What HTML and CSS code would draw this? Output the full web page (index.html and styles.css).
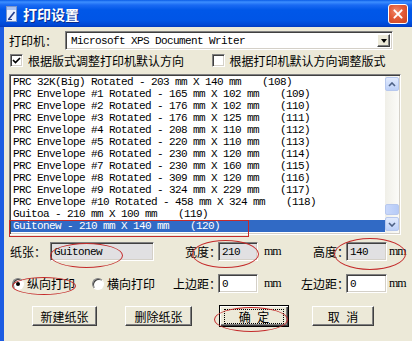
FILE: index.html
```html
<!DOCTYPE html>
<html lang="zh-CN">
<head>
    <meta charset="UTF-8">
    <meta name="viewport" content="width=device-width, initial-scale=1.0">
    <title>打印设置</title>
    <link rel="stylesheet" href="styles.css">
</head>
<body>
    <div class="window">
        <div class="titlebar">
            <svg class="app-icon" viewBox="0 0 13 16" width="13" height="16">
                <rect x="1.5" y="0.5" width="10" height="15" fill="#EAF1FF" stroke="#7B95C9"/>
                <rect x="2" y="1" width="9" height="3" fill="#A9C2F2"/>
                <path d="M3.5 13.5 L9.5 6" stroke="#233F8E" stroke-width="1.6" fill="none"/>
                <path d="M3 13.5 H7" stroke="#233F8E" fill="none"/>
            </svg>
            <span class="title">打印设置</span>
            <div class="close-btn">
                <svg viewBox="0 0 20 20" width="20" height="20">
                    <path d="M6 6 L14 14 M14 6 L6 14" stroke="#fff" stroke-width="2.2" stroke-linecap="round"/>
                </svg>
            </div>
        </div>

        <div class="client">
            <div class="row printer-row">
                <span class="printer-label">打印机：</span>
                <div class="combo sunken">
                    <span class="mono combo-text">Microsoft XPS Document Writer</span>
                    <span class="combo-btn"><span class="tri"></span></span>
                </div>
            </div>

            <div class="row check-row">
                <span class="check-item">
                    <span class="checkbox">
                        <svg viewBox="0 0 9 9" width="9" height="9"><path d="M1 4 L3.5 6.5 L8 2" stroke="#000" stroke-width="1.7" fill="none"/></svg>
                    </span>
                    根据版式调整打印机默认方向
                </span>
                <span class="check-item">
                    <span class="checkbox"></span>
                    根据打印机默认方向调整版式
                </span>
            </div>

            <div class="listbox sunken">
                <ul class="items">
                    <li>PRC 32K(Big) Rotated - 203 mm X 140 mm<span class="code">(108)</span></li>
                    <li>PRC Envelope #1 Rotated - 165 mm X 102 mm<span class="code">(109)</span></li>
                    <li>PRC Envelope #2 Rotated - 176 mm X 102 mm<span class="code">(110)</span></li>
                    <li>PRC Envelope #3 Rotated - 176 mm X 125 mm<span class="code">(111)</span></li>
                    <li>PRC Envelope #4 Rotated - 208 mm X 110 mm<span class="code">(112)</span></li>
                    <li>PRC Envelope #5 Rotated - 220 mm X 110 mm<span class="code">(113)</span></li>
                    <li>PRC Envelope #6 Rotated - 230 mm X 120 mm<span class="code">(114)</span></li>
                    <li>PRC Envelope #7 Rotated - 230 mm X 160 mm<span class="code">(115)</span></li>
                    <li>PRC Envelope #8 Rotated - 309 mm X 120 mm<span class="code">(116)</span></li>
                    <li>PRC Envelope #9 Rotated - 324 mm X 229 mm<span class="code">(117)</span></li>
                    <li>PRC Envelope #10 Rotated - 458 mm X 324 mm<span class="code">(118)</span></li>
                    <li>Guitoa - 210 mm X 100 mm<span class="code">(119)</span></li>
                    <li class="selected">Guitonew - 210 mm X 140 mm<span class="code">(120)</span></li>
                </ul>
                <div class="scrollbar">
                    <div class="sb-btn">
                        <svg viewBox="0 0 8 5" width="8" height="5"><path d="M1 4 L4 1 L7 4" stroke="#4D6185" stroke-width="1.6" fill="none"/></svg>
                    </div>
                    <div class="sb-track"><div class="sb-thumb"></div></div>
                    <div class="sb-btn">
                        <svg viewBox="0 0 8 5" width="8" height="5"><path d="M1 1 L4 4 L7 1" stroke="#4D6185" stroke-width="1.6" fill="none"/></svg>
                    </div>
                </div>
            </div>

            <div class="row field-row paper-row">
                <span class="paper-label">纸张：</span>
                <div class="textbox sunken readonly name-box"><span class="mono">Guitonew</span></div>
                <span class="field-label wide"><span>宽度：</span></span>
                <div class="textbox sunken readonly small-box"><span class="mono">210</span></div>
                <span class="unit">mm</span>
                <span class="field-label narrow"><span>高度：</span></span>
                <div class="textbox sunken readonly small-box last"><span class="mono">140</span></div>
                <span class="unit end">mm</span>
            </div>

            <div class="row field-row margin-row">
                <div class="radio-group">
                    <span class="radio-item first"><span class="radio on"></span>纵向打印</span>
                    <span class="radio-item"><span class="radio"></span>横向打印</span>
                    <span class="field-label push"><span>上边距：</span></span>
                </div>
                <div class="textbox sunken small-box"><span class="mono">0</span></div>
                <span class="unit">mm</span>
                <span class="field-label narrow"><span>左边距：</span></span>
                <div class="textbox sunken small-box last"><span class="mono">0</span></div>
                <span class="unit end">mm</span>
            </div>

            <div class="row button-row">
                <button class="btn new-btn">新建纸张</button>
                <button class="btn del-btn">删除纸张</button>
                <button class="btn ok-btn"><span class="focus">确 定</span></button>
                <button class="btn cancel-btn">取 消</button>
            </div>
        </div>

        <!-- red hand-drawn marks over the dialog -->
        <div class="mark mark-row"></div>
        <div class="mark oval oval-name"></div>
        <div class="mark oval oval-width"></div>
        <div class="mark oval oval-height"></div>
        <div class="mark oval oval-portrait"></div>
        <div class="mark oval oval-ok"></div>
    </div>
</body>
</html>
```

FILE: styles.css
```css
* {
    margin: 0;
    padding: 0;
    box-sizing: border-box;
}

body {
    width: 412px;
    height: 341px;
    overflow: hidden;
    background: #ECE9D8;
    font-family: "Noto Sans CJK SC", sans-serif;
    font-size: 12px;
    color: #000;
}

.window {
    position: relative;
    width: 412px;
    height: 341px;
    display: flex;
    flex-direction: column;
}

.mono,
.items li {
    font-family: "Liberation Mono", monospace;
    font-size: 11px;
    letter-spacing: -0.6px;
    white-space: pre;
}

/* title bar */
.titlebar {
    height: 27px;
    flex: none;
    display: flex;
    align-items: center;
    padding: 0 4px 0 5px;
    background: linear-gradient(to bottom, #0A5CE6 0px, #3D8FFF 2px, #1A6AF3 5px, #0057E8 10px, #0055E6 20px, #0047D4 25px, #0039BE 27px);
    color: #fff;
}

.app-icon {
    margin-right: 5px;
}

.title {
    flex: 1;
    font-size: 14px;
    font-weight: bold;
    text-shadow: 1px 1px 0 #0A2A8A;
}

.close-btn {
    width: 20px;
    height: 20px;
    border: 1px solid #fff;
    border-radius: 3px;
    background: radial-gradient(circle at 40% 35%, #F08A6C 0%, #E25A37 45%, #C9431F 100%);
    display: flex;
    align-items: center;
    justify-content: center;
}

.close-btn svg {
    width: 18px;
    height: 18px;
}

/* dialog body */
.client {
    flex: 1;
    border-left: 4px solid #1C5CE2;
    padding-left: 5px;
}

.row {
    display: flex;
    align-items: center;
}

.sunken {
    border: 1px solid;
    border-color: #808080 #fff #fff #808080;
    box-shadow: inset 1px 1px #404040, inset -1px -1px #D4D0C8;
    background: #fff;
}

.printer-row {
    margin-top: 4px;
    height: 19px;
}

.printer-label {
    width: 56px;
}

.combo {
    width: 328px;
    height: 19px;
    display: flex;
    align-items: center;
    padding: 2px 2px 2px 5px;
}

.combo-text {
    flex: 1;
}

.combo-btn {
    width: 13px;
    height: 13px;
    background: #ECE9D8;
    border: 1px solid;
    border-color: #fff #404040 #404040 #fff;
    box-shadow: inset -1px -1px #808080;
    display: flex;
    align-items: center;
    justify-content: center;
}

.tri {
    width: 0;
    height: 0;
    border-left: 3.5px solid transparent;
    border-right: 3.5px solid transparent;
    border-top: 4px solid #000;
}

.check-row {
    margin-top: 4px;
    height: 13px;
}

.check-item {
    width: 210px;
    display: flex;
    align-items: center;
    gap: 5px;
}

.checkbox {
    width: 13px;
    height: 13px;
    margin-left: 1px;
    border: 1px solid;
    border-color: #808080 #fff #fff #808080;
    box-shadow: inset 1px 1px #404040, inset -1px -1px #D4D0C8;
    background: #fff;
    display: flex;
    align-items: center;
    justify-content: center;
}

/* paper list */
.listbox {
    margin-top: 7px;
    width: 392px;
    height: 161px;
    padding: 1px;
    display: flex;
}

.items {
    flex: 1;
    list-style: none;
}

.items li {
    height: 12px;
    line-height: 12px;
    padding-left: 2px;
}

.items li.selected {
    background: #316AC5;
    color: #fff;
}

.code {
    margin-left: 21px;
}

.scrollbar {
    width: 14px;
    display: flex;
    flex-direction: column;
    padding: 1px 0 2px;
    background: linear-gradient(to right, #F0EFE8, #FBFBF8);
}

.sb-btn {
    height: 14px;
    border: 1px solid #B7C8EE;
    border-radius: 2px;
    background: linear-gradient(to bottom, #E2EBFE, #BCD0F8);
    display: flex;
    align-items: center;
    justify-content: center;
}

.sb-track {
    flex: 1;
    display: flex;
    flex-direction: column;
    justify-content: flex-end;
    padding-bottom: 2px;
}

.sb-thumb {
    height: 11px;
    border: 1px solid #B7C8EE;
    border-radius: 2px;
    background: linear-gradient(to right, #C9D8FB, #B6CBF7);
}

/* size / margin fields */
.field-row {
    height: 19px;
}

.paper-row {
    margin-top: 7px;
    padding-left: 1px;
}

.paper-label {
    width: 40px;
}

.textbox {
    height: 19px;
    padding: 0 3px;
    display: flex;
    align-items: center;
}

.textbox.readonly {
    background: #E1E0E2;
}

.name-box {
    width: 104px;
}

.small-box {
    width: 40px;
}

.small-box.last {
    width: 41px;
}

.field-label {
    text-align: right;
    white-space: nowrap;
}

.field-label span {
    margin-right: -3px;
}

.field-label.wide {
    width: 64px;
}

.field-label.narrow {
    width: 48px;
}

.unit {
    width: 40px;
    padding-left: 6px;
    font-family: "Liberation Serif", serif;
    font-size: 12px;
    letter-spacing: -1px;
}

.unit.end {
    width: auto;
    padding-left: 2px;
}

.margin-row {
    margin-top: 13px;
}

.radio-group {
    width: 209px;
    display: flex;
    align-items: center;
    padding-left: 3px;
}

.radio-item {
    display: flex;
    align-items: center;
    gap: 3px;
}

.radio-item.first {
    width: 80px;
}

.radio {
    width: 12px;
    height: 12px;
    border-radius: 50%;
    border: 1px solid;
    border-color: #808080 #fff #fff #808080;
    box-shadow: inset 1px 1px #404040;
    background: #fff;
    display: flex;
    align-items: center;
    justify-content: center;
}

.radio.on::after {
    content: "";
    width: 4px;
    height: 4px;
    border-radius: 50%;
    background: #000;
}

.field-label.push {
    margin-left: auto;
}

/* buttons */
.button-row {
    margin-top: 12px;
    height: 22px;
}

.btn {
    height: 20px;
    font-family: "Noto Sans CJK SC", sans-serif;
    font-size: 12px;
    background: #ECE9D8;
    border: 1px solid;
    border-color: #fff #404040 #404040 #fff;
    box-shadow: inset -1px -1px #808080;
    white-space: pre;
    word-spacing: 4px;
}

.new-btn {
    width: 65px;
    margin-left: 23px;
}

.del-btn {
    width: 67px;
    margin-left: 28px;
}

.ok-btn {
    width: 70px;
    height: 22px;
    margin-left: 27px;
    border: 1px solid #000;
    box-shadow: inset 1px 1px #fff, inset -1px -1px #404040, inset -2px -2px #808080;
    display: flex;
    align-items: center;
    justify-content: center;
}

.focus {
    width: 60px;
    height: 15px;
    line-height: 13px;
    border: 1px dotted #000;
}

.cancel-btn {
    width: 62px;
    margin-left: 23px;
}

/* red annotation marks */
.mark {
    position: absolute;
    border: 1px solid #C42B2B;
    pointer-events: none;
}

.mark-row {
    left: 9px;
    top: 220px;
    width: 240px;
    height: 17px;
}

.oval {
    border-radius: 50%;
}

.oval-name {
    left: 50px;
    top: 243px;
    width: 73px;
    height: 25px;
}

.oval-width {
    left: 192px;
    top: 240px;
    width: 67px;
    height: 28px;
}

.oval-height {
    left: 334px;
    top: 238px;
    width: 72px;
    height: 32px;
}

.oval-portrait {
    left: 12px;
    top: 277px;
    width: 64px;
    height: 18px;
}

.oval-ok {
    left: 214px;
    top: 307px;
    width: 74px;
    height: 25px;
}
```
